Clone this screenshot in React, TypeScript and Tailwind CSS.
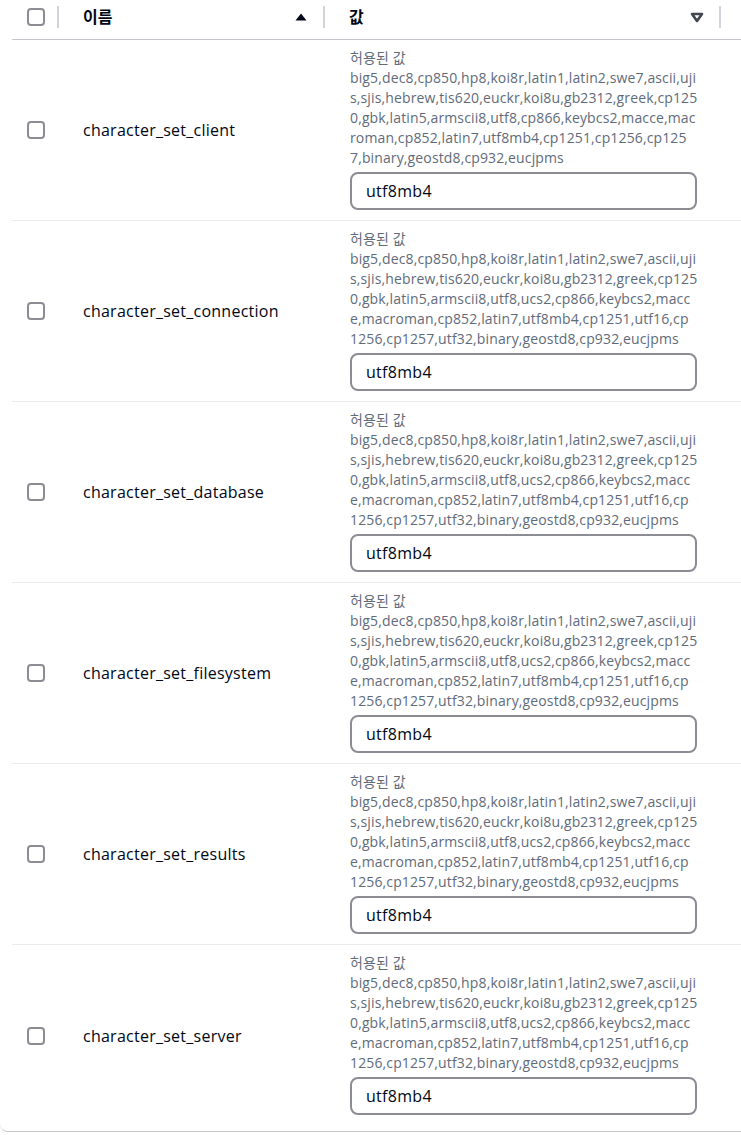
import React from "react";

// allowed values, wrapped as in the console (mid-word breaks)
const CLIENT_LINES = [
  "big5,dec8,cp850,hp8,koi8r,latin1,latin2,swe7,ascii,uji",
  "s,sjis,hebrew,tis620,euckr,koi8u,gb2312,greek,cp125",
  "0,gbk,latin5,armscii8,utf8,cp866,keybcs2,macce,mac",
  "roman,cp852,latin7,utf8mb4,cp1251,cp1256,cp125",
  "7,binary,geostd8,cp932,eucjpms",
];
const FULL_LINES = [
  "big5,dec8,cp850,hp8,koi8r,latin1,latin2,swe7,ascii,uji",
  "s,sjis,hebrew,tis620,euckr,koi8u,gb2312,greek,cp125",
  "0,gbk,latin5,armscii8,utf8,ucs2,cp866,keybcs2,macc",
  "e,macroman,cp852,latin7,utf8mb4,cp1251,utf16,cp",
  "1256,cp1257,utf32,binary,geostd8,cp932,eucjpms",
];

const rows = [
  { name: "character_set_client", lines: CLIENT_LINES },
  { name: "character_set_connection", lines: FULL_LINES },
  { name: "character_set_database", lines: FULL_LINES },
  { name: "character_set_filesystem", lines: FULL_LINES },
  { name: "character_set_results", lines: FULL_LINES },
  { name: "character_set_server", lines: FULL_LINES },
];

function Checkbox() {
  return <div className="w-[18px] h-[18px] rounded-[4px] border-2 border-[#8c8c94] bg-white" />;
}

function Divider() {
  return <div className="w-[2px] h-[22px] bg-[#d1d5db]" />;
}

export default function App() {
  return (
    <div
      className="w-[741px] bg-white text-[#000716]"
      style={{ fontFamily: '"Open Sans", "Noto Sans CJK KR", sans-serif' }}
    >
      <div className="border-b border-[#c6c6cd] rounded-bl-lg">
        {/* header */}
        <div className="ml-[12px] h-[40px] border-b border-[#c6c6cd] flex items-start pt-[6px]">
          <div className="w-[45px] h-[22px] flex items-center justify-center pl-[2px]">
            <Checkbox />
          </div>
          <Divider />
          <div className="w-[264px] h-[22px] flex items-center justify-between pl-[24px] pr-[16px]">
            <span className="text-[16px] font-bold">이름</span>
            <svg width="12" height="8" viewBox="0 0 12 8">
              <path d="M6 0.5L11.5 7.5H0.5Z" fill="#000716" />
            </svg>
          </div>
          <Divider />
          <div className="w-[394px] h-[22px] flex items-center justify-between pl-[24px] pr-[15px]">
            <span className="text-[16px] font-bold">값</span>
            <svg width="14" height="11" viewBox="0 0 14 11">
              <path d="M2 2H12L7 9Z" fill="none" stroke="#424650" strokeWidth="2.6" strokeLinejoin="round" />
            </svg>
          </div>
          <Divider />
        </div>

        {/* rows */}
        {rows.map((row, i) => {
          const last = i === rows.length - 1;
          return (
            <div
              key={row.name}
              className={`ml-[12px] flex items-stretch ${last ? "h-[186px] pb-[5px]" : "h-[181px] border-b border-[#e9ebed]"}`}
            >
              <div className="w-[47px] flex items-center justify-center pl-[1px]">
                <Checkbox />
              </div>
              <div className="w-[266px] flex items-center pl-[24px]">
                <span className="text-[16px] tracking-[0.25px]">{row.name}</span>
              </div>
              <div className="pl-[25px] pt-[8px] flex flex-col">
                <div className="w-[348px] text-[14px] leading-[20px] text-[#5f6b7a] whitespace-nowrap tracking-[0.13px]">
                  <div>허용된 값</div>
                  {row.lines.map((line, j) => (
                    <div key={j}>{line}</div>
                  ))}
                </div>
                <div className="mt-[4px] w-[347px] h-[38px] border-2 border-[#8c8c94] rounded-[8px] flex items-center px-[14px]">
                  <span className="text-[16px] tracking-[0.3px]">utf8mb4</span>
                </div>
              </div>
            </div>
          );
        })}
      </div>
    </div>
  );
}
